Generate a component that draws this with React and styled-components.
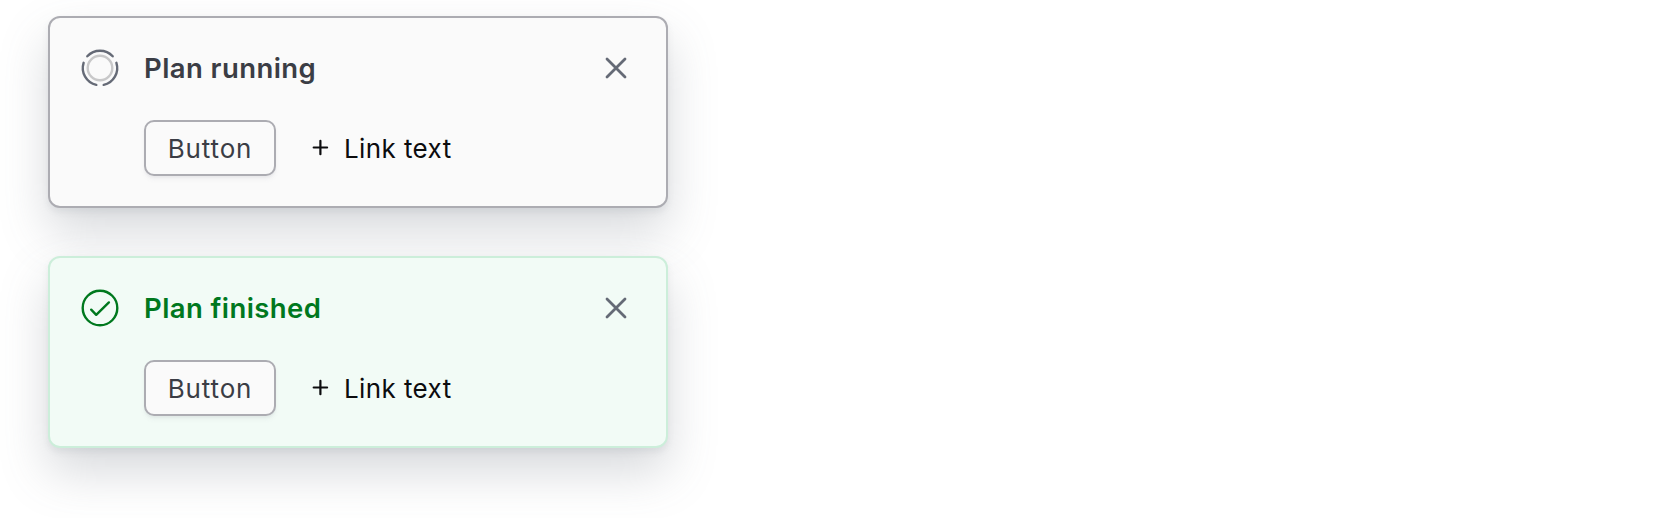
import React from "react";
import styled, { createGlobalStyle } from "styled-components";

const GlobalStyle = createGlobalStyle`
  *, *::before, *::after { box-sizing: border-box; }
  body {
    margin: 0;
    background: #fff;
    font-family: Inter, "Liberation Sans", sans-serif;
    -webkit-font-smoothing: antialiased;
  }
`;

const Page = styled.main`
  display: flex;
  flex-direction: column;
  align-items: flex-start;
  gap: 48px;
  height: 518px;
  padding: 16px 48px;
  overflow: hidden;
`;

const tones = {
  neutral: { surface: "#fafafa", border: "#acacb2", title: "#3b3d45" },
  success: { surface: "#f2fbf6", border: "#cceeda", title: "#00781e" },
};

const Toast = styled.section`
  display: flex;
  align-items: flex-start;
  width: 620px;
  height: 192px;
  padding: 30px;
  border: 2px solid ${({ $tone }) => tones[$tone].border};
  border-radius: 12px;
  background: ${({ $tone }) => tones[$tone].surface};
  color: ${({ $tone }) => tones[$tone].title};
  box-shadow: 0 4px 6px rgba(101, 106, 118, 0.1), 0 24px 48px rgba(101, 106, 118, 0.25);
`;

const StatusIcon = styled.svg`
  flex: none;
  width: 40px;
  height: 40px;
  margin-right: 24px;
  fill: none;
  stroke-linecap: round;
  stroke-linejoin: round;
`;

const Content = styled.div`
  flex: 1;
  display: flex;
  flex-direction: column;
  gap: 32px;
`;

const Title = styled.h2`
  margin: 0;
  font-size: 27.5px;
  font-weight: 600;
  line-height: 40px;
  letter-spacing: 0.42px;
  white-space: nowrap;
`;

const Actions = styled.div`
  display: flex;
  align-items: center;
  gap: 32px;
`;

const Button = styled.button`
  width: 132px;
  height: 56px;
  padding: 2px 0 0;
  border: 2px solid #acacb2;
  border-radius: 10px;
  background: #fafafa;
  box-shadow: 0 2px 2px rgba(101, 106, 118, 0.05), 0 4px 4px rgba(101, 106, 118, 0.05);
  color: #3b3d45;
  font: 400 26px/32px Inter, "Liberation Sans", sans-serif;
  letter-spacing: 0.85px;
`;

const Link = styled.a`
  display: flex;
  align-items: center;
  gap: 12px;
  color: #0c0c0e;
  font-size: 26px;
  font-weight: 400;
  line-height: 32px;
  letter-spacing: 0.4px;
  white-space: nowrap;
`;

const LinkLabel = styled.span`
  padding-top: 2px;
`;

const PlusIcon = styled.svg`
  width: 24px;
  height: 24px;
  fill: none;
  stroke: currentColor;
  stroke-width: 2.2;
  stroke-linecap: round;
`;

const Dismiss = styled.button`
  display: grid;
  place-items: center;
  width: 40px;
  height: 40px;
  padding: 0;
  border: 0;
  background: none;
  color: #656a76;
`;

const CloseIcon = styled.svg`
  width: 24px;
  height: 24px;
  fill: none;
  stroke: currentColor;
  stroke-width: 2.8;
  stroke-linecap: round;
`;

function RunningIcon() {
  return (
    <StatusIcon viewBox="0 0 40 40" aria-hidden="true">
      <circle cx="20" cy="20" r="12.3" stroke="#c8c8c9" strokeWidth="2.4" />
      <path
        d="M7.3 8.3A17.3 17.3 0 0 1 32.7 8.3M36.4 14.8A17.3 17.3 0 0 1 23.7 36.9M16.3 36.9A17.3 17.3 0 0 1 3.6 14.8"
        stroke="#656a76"
        strokeWidth="2.4"
      />
    </StatusIcon>
  );
}

function FinishedIcon() {
  return (
    <StatusIcon viewBox="0 0 40 40" stroke="currentColor" strokeWidth="2.4" aria-hidden="true">
      <circle cx="20" cy="20" r="17.3" />
      <path d="M11.2 21.7L16.2 26.8L28.9 14.4" />
    </StatusIcon>
  );
}

function Notification({ tone, title, icon }) {
  return (
    <Toast $tone={tone}>
      {icon}
      <Content>
        <Title>{title}</Title>
        <Actions>
          <Button type="button">Button</Button>
          <Link>
            <PlusIcon viewBox="0 0 24 24" aria-hidden="true">
              <path d="M12.4 4.8v13.4M5.7 11.5h13.4" />
            </PlusIcon>
            <LinkLabel>Link text</LinkLabel>
          </Link>
        </Actions>
      </Content>
      <Dismiss type="button" aria-label="Dismiss">
        <CloseIcon viewBox="0 0 24 24" aria-hidden="true">
          <path d="M3 3l18 18M21 3L3 21" />
        </CloseIcon>
      </Dismiss>
    </Toast>
  );
}

export default function App() {
  return (
    <>
      <GlobalStyle />
      <Page>
        <Notification tone="neutral" title="Plan running" icon={<RunningIcon />} />
        <Notification tone="success" title="Plan finished" icon={<FinishedIcon />} />
      </Page>
    </>
  );
}
